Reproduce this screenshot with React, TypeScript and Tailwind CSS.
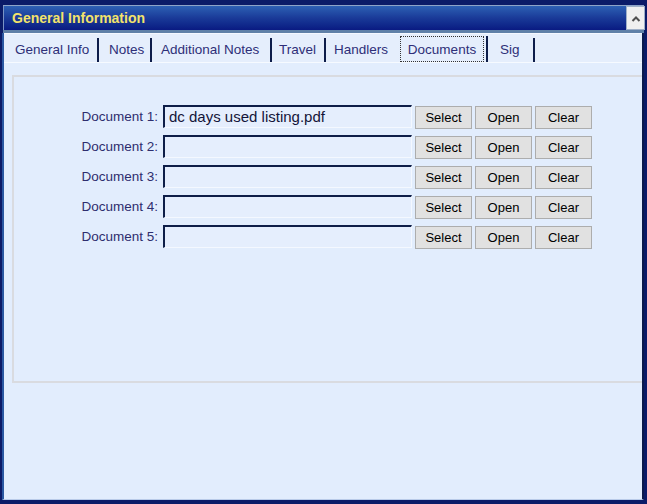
import React from "react";

const tabs = [
  { label: "General Info", w: "w-[95px]", pl: "pl-[11px]", sep: true },
  { label: "Notes", w: "w-[53px]", pl: "pl-[10px]", sep: true },
  { label: "Additional Notes", w: "w-[120px]", pl: "pl-[9px]", sep: true },
  { label: "Travel", w: "w-[54px]", pl: "pl-[7px]", sep: true },
  { label: "Handlers", w: "w-[70px]", pl: "pl-[8px]", sep: false },
];

const docs = ["dc days used listing.pdf", "", "", "", ""];

function Btn({ children }: { children: React.ReactNode }) {
  return (
    <button className="w-[57px] h-[23px] bg-[#e1e1e1] border border-[#adadad] text-[13px] text-black leading-none">
      {children}
    </button>
  );
}

export default function App() {
  return (
    <div className="w-[647px] h-[504px] bg-[#0b1b68] flex flex-col overflow-hidden font-['Liberation_Sans',Arial,sans-serif] text-[13.5px]">
      <div className="h-[5px] shrink-0" />
      <div className="h-px shrink-0 bg-[#8ea4c8] mx-[3px]" />
      {/* header */}
      <div className="h-[24px] shrink-0 flex ml-[3px] mr-[2px]">
        <div className="flex-1 border-l border-[#7b94c4] bg-gradient-to-b from-[#2e60b4] via-[#1a3a98] to-[#0a1a82] flex items-center pl-[8px] text-[14px] font-bold text-[#f3e36b]">
          General Information
        </div>
        <button className="w-[19px] h-[24px] bg-[#f0f0f0] border border-[#9fb0c8] flex items-center justify-center">
          <svg width="10" height="7" viewBox="0 0 10 7">
            <polyline points="1.5,6 5,2.5 8.5,6" fill="none" stroke="#505050" strokeWidth="2" />
          </svg>
        </button>
      </div>
      <div className="h-[3px] shrink-0 bg-[#5f80a8] mx-[3px]" />
      {/* body */}
      <div className="flex-1 flex flex-col ml-[2px] mr-[3px] border-l-2 border-[#2a58a2] border-r-2 border-r-[#0c1a4c] border-b border-b-[#b9cbe9] bg-[#e2edfd]">
        <div className="h-[29px] shrink-0 flex items-end bg-[#e5eefc] border-t border-[#f4f8ff] text-[#2e2e78]">
          {tabs.map((t) => (
            <div
              key={t.label}
              className={`${t.w} ${t.pl} h-[24px] flex items-center whitespace-nowrap ${t.sep ? "border-r-2 border-[#0d1d4a]" : ""}`}
            >
              {t.label}
            </div>
          ))}
          <div className="w-[92px] h-[26px] flex border-r-2 border-[#0d1d4a] pl-[4px] pr-[2px]">
            <div className="flex-1 border border-dotted border-[#333] flex items-start justify-center pt-[3px] whitespace-nowrap">
              Documents
            </div>
          </div>
          <div className="w-[47px] pl-[12px] h-[24px] flex items-center border-r-2 border-[#0d1d4a]">Sig</div>
        </div>
        <div className="h-px shrink-0 bg-[#f6faff]" />
        <div className="pt-[12px] pl-[8px]">
          <div className="h-[308px] border-2 border-r-0 border-[#d9dbe0] pt-[28px] flex flex-col">
            {docs.map((d, i) => (
              <div key={i} className="h-[30px] flex items-start">
                <div className="w-[144px] h-[23px] mt-px flex items-center justify-end text-[#2e2e6e] whitespace-nowrap">
                  Document {i + 1}:
                </div>
                <div className="ml-[5px] w-[249px] h-[23px] border-t-2 border-l-2 border-[#0e1e48] border-r border-b border-r-[#f4f8ff] border-b-[#f4f8ff] bg-[#e5eefd] flex items-center pl-[4px] text-[15px] text-[#141438] whitespace-nowrap overflow-hidden">
                  {d}
                </div>
                <div className="ml-[3px] mt-px flex gap-[3px]">
                  <Btn>Select</Btn>
                  <Btn>Open</Btn>
                  <Btn>Clear</Btn>
                </div>
              </div>
            ))}
          </div>
        </div>
      </div>
      <div className="h-[4px] shrink-0" />
    </div>
  );
}
